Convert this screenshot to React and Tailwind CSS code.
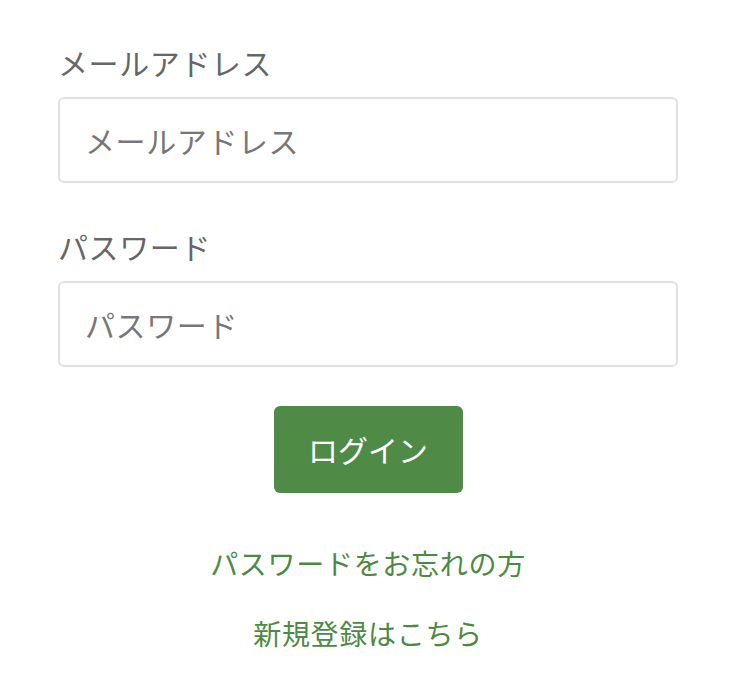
export default function App() {
  return (
    <div
      className="w-[736px] h-[684px] bg-white pt-[40px] px-[58px]"
      style={{ fontFamily: '"Noto Sans CJK JP", "Noto Sans", sans-serif' }}
    >
      <div className="flex flex-col">
        <label className="text-[30px] leading-[44px] tracking-[0.6px] text-[#666666] mb-[13px]">メールアドレス</label>
        <input
          type="email"
          placeholder="メールアドレス"
          className="h-[86px] w-full rounded-[6px] border-2 border-[#e0e0e0] px-[25px] text-[30px] tracking-[0.6px] text-[#555] placeholder:text-[#777777] outline-none"
        />
      </div>
      <div className="flex flex-col mt-[41px]">
        <label className="text-[30px] leading-[44px] tracking-[0.6px] text-[#666666] mb-[13px]">パスワード</label>
        <input
          type="password"
          placeholder="パスワード"
          className="h-[86px] w-full rounded-[6px] border-2 border-[#e0e0e0] px-[25px] text-[30px] tracking-[0.6px] text-[#555] placeholder:text-[#777777] outline-none"
        />
      </div>
      <div className="flex justify-center mt-[39px]">
        <button className="w-[189px] h-[87px] rounded-[6px] bg-[#4f8b46] text-white text-[30px]">
          ログイン
        </button>
      </div>
      <div className="flex flex-col items-center mt-[50px] gap-[30px]">
        <a className="text-[28px] leading-[40px] tracking-[0.7px] text-[#4c8a44]">パスワードをお忘れの方</a>
        <a className="text-[28px] leading-[40px] tracking-[0.7px] text-[#4c8a44]">新規登録はこちら</a>
      </div>
    </div>
  );
}
